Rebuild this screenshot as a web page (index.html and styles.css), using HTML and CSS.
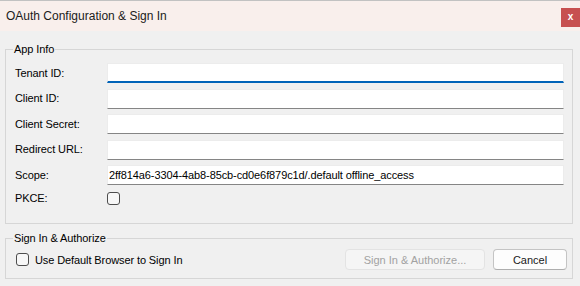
FILE: index.html
```html
<!DOCTYPE html>
<html>
<head>
<meta charset="utf-8">
<title>OAuth Configuration &amp; Sign In</title>
<link rel="stylesheet" href="styles.css">
</head>
<body>
<div class="window">
  <div class="titlebar">
    <span class="title">OAuth Configuration &amp; Sign In</span>
    <span class="close">x</span>
  </div>
  <div class="content">
    <fieldset class="group group-app">
      <legend>App Info</legend>
      <div class="form">
        <label class="lbl">Tenant ID:</label>
        <input class="field focused" type="text" value="">
        <label class="lbl">Client ID:</label>
        <input class="field" type="text" value="">
        <label class="lbl">Client Secret:</label>
        <input class="field" type="text" value="">
        <label class="lbl">Redirect URL:</label>
        <input class="field" type="text" value="">
        <label class="lbl">Scope:</label>
        <input class="field" type="text" value="2ff814a6-3304-4ab8-85cb-cd0e6f879c1d/.default offline_access">
        <label class="lbl">PKCE:</label>
        <div class="cell"><input class="check" type="checkbox"></div>
      </div>
    </fieldset>
    <fieldset class="group group-sign">
      <legend>Sign In &amp; Authorize</legend>
      <div class="actions">
        <label class="check-label"><input class="check" type="checkbox"><span>Use Default Browser to Sign In</span></label>
        <div class="buttons">
          <button class="btn btn-primary" disabled>Sign In &amp; Authorize...</button>
          <button class="btn">Cancel</button>
        </div>
      </div>
    </fieldset>
  </div>
</div>
</body>
</html>
```

FILE: styles.css
```css
* { box-sizing: border-box; }
html, body { margin: 0; padding: 0; }
body {
  width: 580px;
  height: 286px;
  background: #f0f0f0;
  font-family: "Liberation Sans", Arial, sans-serif;
  color: #000;
  overflow: hidden;
}
.window { width: 580px; height: 286px; }
.titlebar {
  height: 31px;
  border-top: 1px solid #c2c2c2;
  background: #f9efec;
  display: flex;
  align-items: flex-start;
}
.title {
  font-size: 12px;
  line-height: 30px;
  padding-left: 6px;
  color: #1b1b1b;
}
.close {
  margin-left: auto;
  margin-top: 7px;
  width: 19px;
  height: 19px;
  background: #c75050;
  color: #fff;
  font-weight: bold;
  font-size: 10px;
  line-height: 18px;
  text-align: center;
}
.content {
  padding: 0 7px 0 5px;
}
.group {
  margin: 0;
  border: 1px solid #d6d6d6;
  min-width: 0;
}
.group legend {
  font-size: 11px;
  line-height: 12px;
  padding: 0 1px;
  color: #000;
  letter-spacing: -0.1px;
}
.group-app {
  margin-top: 12px;
  padding: 8px 8px 16.5px 7px;
}
.group-sign {
  margin-top: 8px;
  padding: 5px 5px 8px 7px;
}
.form {
  display: grid;
  grid-template-columns: 92px 1fr;
  grid-template-rows: repeat(5, 20px) 16px;
  row-gap: 5.5px;
  padding-left: 2px;
  align-items: center;
}
.lbl {
  font-size: 11px;
  line-height: 13px;
  letter-spacing: -0.1px;
}
.field {
  height: 20px;
  width: 100%;
  margin: 0;
  border: 1px solid #ececec;
  border-bottom: 1px solid #858585;
  background: #fff;
  font-family: "Liberation Sans", Arial, sans-serif;
  font-size: 11px;
  letter-spacing: -0.1px;
  padding: 0 0 0 1px;
  color: #000;
  outline: none;
}
.field.focused {
  border-bottom: 2px solid #0063b8;
}
.cell { display: flex; align-items: center; }
.check {
  appearance: none;
  -webkit-appearance: none;
  width: 13px;
  height: 13px;
  margin: 0;
  border: 1px solid #4d4d4d;
  border-radius: 3px;
  background: #f7f7f7;
}
.actions {
  display: flex;
  align-items: center;
  height: 21px;
}
.check-label {
  display: flex;
  align-items: center;
  gap: 6px;
  padding-left: 3px;
  font-size: 11px;
  letter-spacing: -0.1px;
}
.buttons {
  margin-left: auto;
  display: flex;
  gap: 8px;
}
.btn {
  height: 21px;
  width: 74px;
  margin: 0;
  padding: 0;
  border: 1px solid #c4c4c4;
  border-bottom-color: #aeaeae;
  border-radius: 4px;
  background: #fdfdfd;
  font-family: "Liberation Sans", Arial, sans-serif;
  font-size: 11px;
  color: #1a1a1a;
}
.btn-primary {
  width: 140px;
  border-color: #e3e3e3;
  background: #f5f5f5;
  color: #a2a2a2;
}
```
